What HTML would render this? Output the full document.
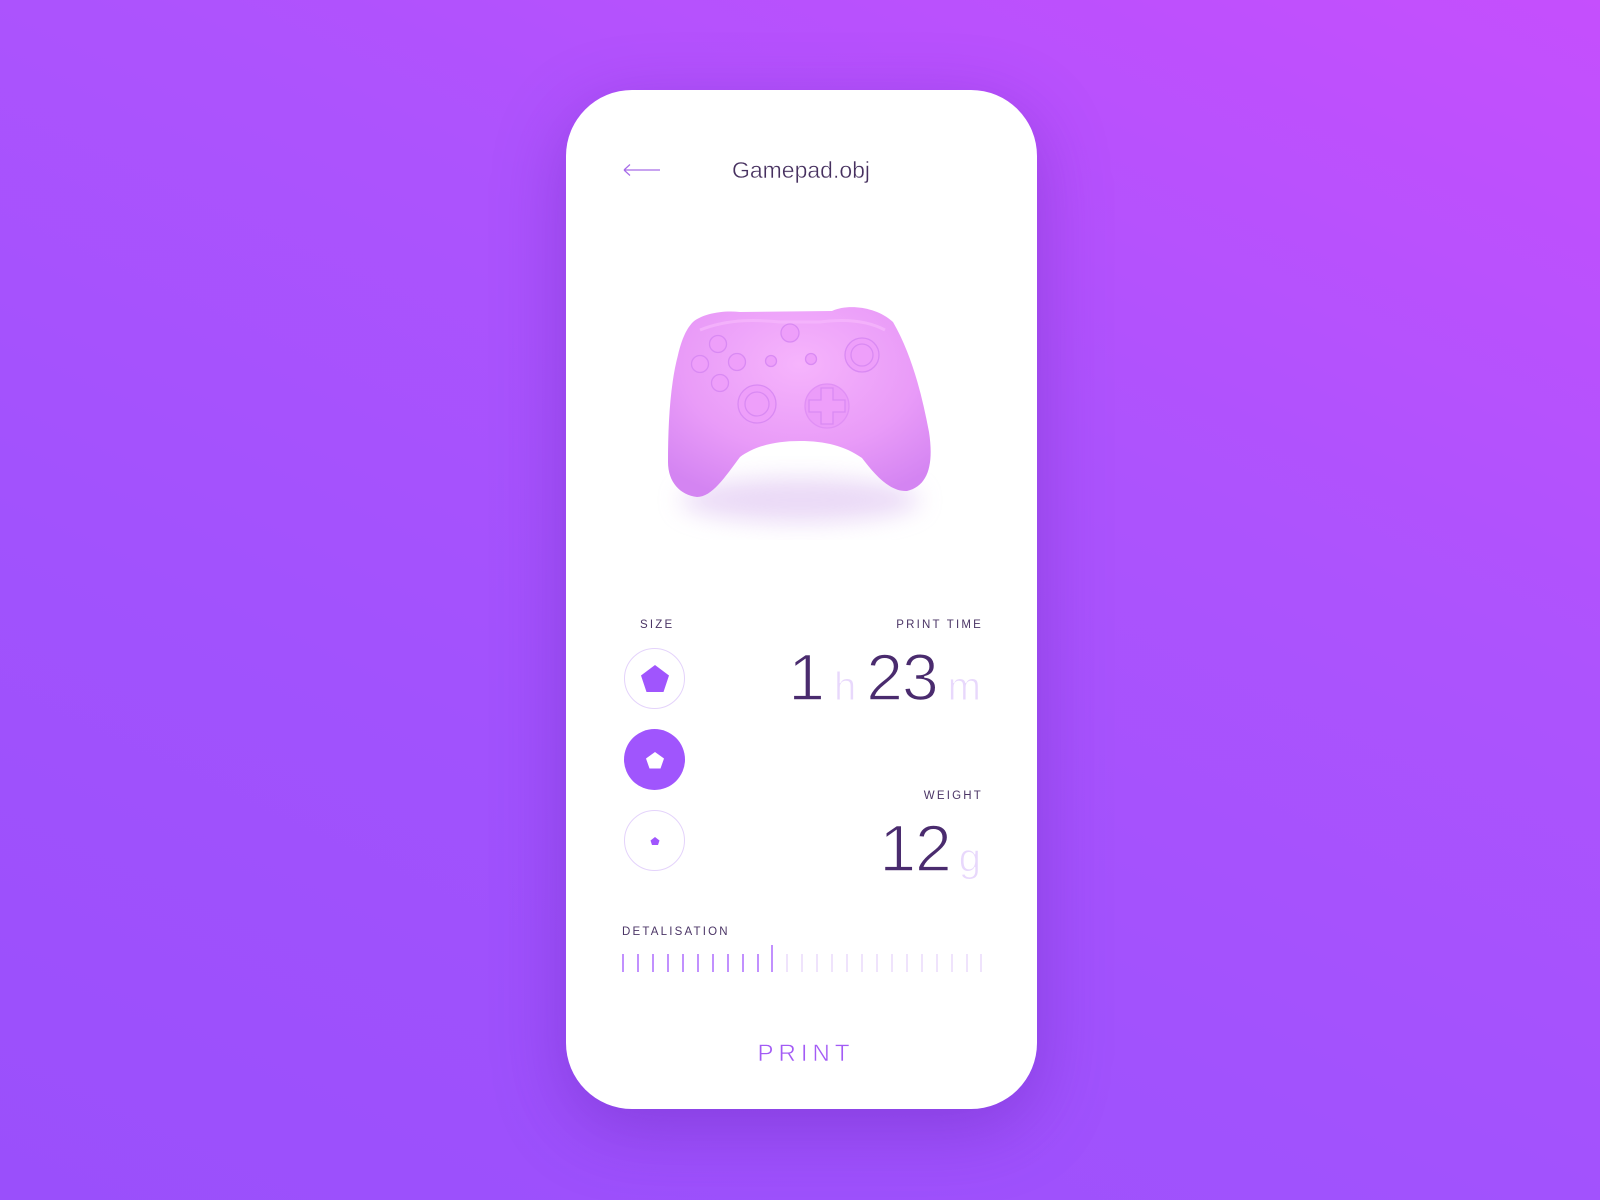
<!DOCTYPE html>
<html><head><meta charset="utf-8">
<style>
html,body{margin:0;padding:0}
body{width:1600px;height:1200px;overflow:hidden;position:relative;
background:linear-gradient(205deg,#c54ffd 0%,#ad53fd 35%,#a152fd 65%,#9a4ffb 100%);
font-family:"Liberation Sans",sans-serif}
.card{position:absolute;left:566px;top:90px;width:471px;height:1019px;border-radius:66px;background:#fff;
box-shadow:0 20px 70px rgba(90,30,170,.35)}
.t{position:absolute;white-space:nowrap}
.lbl{font-size:11.5px;letter-spacing:2.2px;color:#4b3566}
.big{font-size:66px;color:#4a2b6e;-webkit-text-stroke:1.6px #fff;paint-order:normal;letter-spacing:-1px}
.unit{font-size:40px;color:#e8d8fc;-webkit-text-stroke:1px #fff}
.circ{position:absolute;width:61px;height:61px;border-radius:50%;border:1px solid #e4d3fb;box-sizing:border-box}
</style></head><body>
<div class="card"></div>
<svg class="t" style="left:622px;top:163px" width="40" height="14"><path d="M2 7H38M2 7L8 1.5M2 7L8 12.5" stroke="#a76ce8" stroke-width="1.2" fill="none"/></svg>
<div class="t" style="left:701px;top:157px;width:200px;text-align:center;font-size:23px;color:#46305f;-webkit-text-stroke:0.4px #fff">Gamepad.obj</div>

<svg class="t" style="left:620px;top:280px" width="340" height="260" viewBox="620 280 340 260">
<defs>
<radialGradient id="g" cx="0.5" cy="0.3" r="0.75"><stop offset="0" stop-color="#f6b4fc"/><stop offset="0.6" stop-color="#e99bf8"/><stop offset="1" stop-color="#d484f2"/></radialGradient>
<filter id="s" x="-30%" y="-50%" width="160%" height="200%"><feGaussianBlur stdDeviation="12"/></filter>
</defs>
<ellipse cx="800" cy="500" rx="120" ry="22" fill="#d6b4ee" opacity=".5" filter="url(#s)"/>
<path d="M693 322 C702 314 722 310 740 312 L832 311 C850 303 878 308 893 322 C912 355 922 395 929 432 C934 465 928 486 907 491 C890 492 875 475 862 458 C845 446 825 441 800 441 C775 441 755 446 740 457 C725 477 712 497 697 497 C680 495 668 482 668 462 C668 425 670 385 678 355 C682 338 687 328 693 322Z" fill="url(#g)"/>
<path d="M700 330 C730 318 760 320 780 322 L820 322 C850 318 870 322 885 330" stroke="#f6b8fc" stroke-width="3" fill="none" opacity=".7"/>
<g fill="#ee9ffa" stroke="#d98af3" stroke-width="1.3">
<circle cx="718" cy="344" r="8.5"/><circle cx="700" cy="364" r="8.5"/><circle cx="737" cy="362" r="8.5"/><circle cx="720" cy="383" r="8.5"/>
<circle cx="771" cy="361" r="5.5"/><circle cx="811" cy="359" r="5.5"/><circle cx="790" cy="333" r="9"/>
<circle cx="862" cy="355" r="17"/><circle cx="862" cy="355" r="11"/>
<circle cx="757" cy="404" r="19"/><circle cx="757" cy="404" r="12"/>
<circle cx="827" cy="406" r="22" fill="#eb9cf9" stroke="#e090f5"/>
<path d="M821 388h12v12h12v12h-12v12h-12v-12h-12v-12h12z"/>
</g>
</svg>

<div class="t lbl" style="left:640px;top:619px">SIZE</div>
<div class="t lbl" style="right:617px;top:619px">PRINT TIME</div>
<div class="circ" style="left:624px;top:648px"></div>
<div class="circ" style="left:624px;top:729px;background:#a055fd;border:none"></div>
<div class="circ" style="left:624px;top:810px"></div>
<svg class="t" style="left:624px;top:648px" width="62" height="260">
<path d="M31 17 L45 27.5 L39.5 44 L22.5 44 L17 27.5Z" fill="#a055fd"/>
<path d="M31 104 L40 110.5 L36.5 120.5 L25.5 120.5 L22 110.5Z" fill="#fff"/>
<path d="M31 189 L35.5 192.5 L34 197 L28 197 L26.5 192.5Z" fill="#a055fd"/>
</svg>

<div class="t" style="right:619px;top:642px;line-height:70px"><span class="big">1</span><span class="unit" style="margin-left:10px">h</span><span class="big" style="margin-left:10px">23</span><span class="unit" style="margin-left:10px">m</span></div>
<div class="t lbl" style="right:617px;top:790px">WEIGHT</div>
<div class="t" style="right:619px;top:813px;line-height:70px"><span class="big">12</span><span class="unit" style="margin-left:8px">g</span></div>

<div class="t lbl" style="left:622px;top:926px">DETALISATION</div>
<svg class="t" style="left:620px;top:940px" width="370" height="35">
<g stroke="#a055fd" stroke-width="1.3">
<path d="M3 14v18M18 14v18M33 14v18M48 14v18M63 14v18M78 14v18M93 14v18M108 14v18M123 14v18M138 14v18M152 5v27"/>
</g>
<g stroke="#e6d4fb" stroke-width="1.3">
<path d="M167 14v18M182 14v18M197 14v18M212 14v18M227 14v18M242 14v18M257 14v18M272 14v18M287 14v18M302 14v18M317 14v18M332 14v18M347 14v18M361 14v18"/>
</g>
</svg>

<div class="t" style="left:701px;top:1040px;width:200px;text-align:center;font-size:24px;letter-spacing:5px;color:#a35bf5;padding-left:5px;-webkit-text-stroke:0.5px #fff">PRINT</div>
</body></html>
